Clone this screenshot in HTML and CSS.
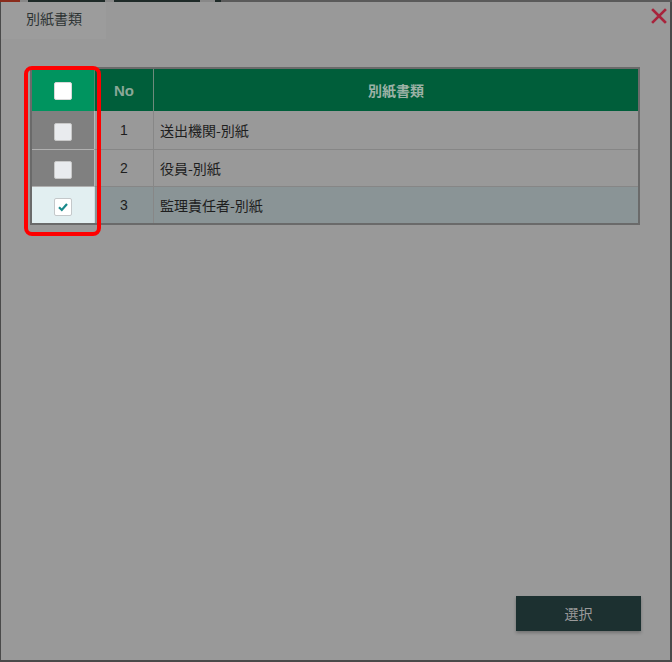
FILE: index.html
```html
<!DOCTYPE html>
<html lang="ja">
<head>
<meta charset="utf-8">
<link rel="stylesheet" href="styles.css">
</head>
<body>
<div class="topstrip">
  <span class="seg red"></span><span class="seg gap"></span><span class="seg dark w1"></span><span class="seg gap2"></span><span class="seg dark w2"></span><span class="seg gap3"></span><span class="seg dark w3"></span><span class="seg line"></span>
</div>
<div class="dialog">
  <div class="dlg-head">
    <div class="tab">別紙書類</div>
    <div class="close">
      <svg width="16" height="16" viewBox="0 0 16 16"><path d="M2 2 L14 14 M14 2 L2 14" stroke="#a8243c" stroke-width="2.6" stroke-linecap="square"/></svg>
    </div>
  </div>
  <div class="dlg-body">
    <div class="table-wrap">
      <table class="grid">
        <thead>
          <tr>
            <th class="c-check hl-head"><span class="cb cb-head"></span></th>
            <th class="c-no">No</th>
            <th class="c-name">別紙書類</th>
          </tr>
        </thead>
        <tbody>
          <tr>
            <td class="c-check hl-gray"><span class="cb cb-off"></span></td>
            <td class="c-no">1</td>
            <td class="c-name">送出機関-別紙</td>
          </tr>
          <tr class="later">
            <td class="c-check hl-gray"><span class="cb cb-off"></span></td>
            <td class="c-no">2</td>
            <td class="c-name">役員-別紙</td>
          </tr>
          <tr class="later selected">
            <td class="c-check hl-light"><span class="cb cb-on"><svg width="12" height="10" viewBox="0 0 12 10"><path d="M2 5.2 L4.8 8 L10 2" fill="none" stroke="#1a8a8c" stroke-width="2.2"/></svg></span></td>
            <td class="c-no">3</td>
            <td class="c-name">監理責任者-別紙</td>
          </tr>
        </tbody>
      </table>
      <div class="highlight"></div>
    </div>
  </div>
  <div class="dlg-foot">
    <button class="btn">選択</button>
  </div>
</div>
</body>
</html>
```
FILE: styles.css
```css
* { box-sizing: border-box; }
html, body { margin: 0; padding: 0; }
body {
  width: 672px;
  height: 662px;
  background: #4a4a4a;
  font-family: "Noto Sans CJK JP", "Liberation Sans", sans-serif;
  overflow: hidden;
}
.topstrip {
  display: flex;
  height: 2px;
}
.seg { display: block; height: 2px; }
.red { width: 20px; background: #8a2c1c; }
.gap { width: 8px; background: #888; }
.dark { background: #1e2a28; }
.w1 { width: 77px; }
.gap2 { width: 9px; background: #888; }
.w2 { width: 86px; }
.gap3 { width: 15px; background: #888; }
.w3 { width: 6px; }
.line { flex: 1; background: #5a5a5a; }

.dialog {
  margin-left: 1px;
  width: 669px;
  height: 658px;
  background: #999999;
  display: flex;
  flex-direction: column;
}
.dlg-head {
  display: flex;
  justify-content: space-between;
  align-items: flex-start;
  height: 65px;
}
.tab {
  width: 105px;
  height: 37px;
  background: #9c9c9c;
  color: #2e3434;
  font-size: 14px;
  line-height: 33px;
  padding-left: 25px;
}
.close {
  width: 16px;
  height: 16px;
  margin-top: 6px;
  margin-right: 3px;
}
.close svg { display: block; }

.dlg-body {
  padding-left: 29px;
  flex: 1;
}
.table-wrap {
  position: relative;
  width: 610px;
}
.grid {
  width: 610px;
  border-collapse: separate;
  border-spacing: 0;
  border: 2px solid #6a6a6a;
  table-layout: fixed;
  font-size: 14px;
}
.grid th {
  height: 42px;
  background: #005e3a;
  font-family: "Liberation Sans", "Noto Sans CJK JP", sans-serif;
  font-weight: bold;
  font-size: 15px;
  color: #8aa898;
  padding: 0;
}
.grid th.c-name { color: #9cb2a6; font-family: "Noto Sans CJK JP", sans-serif; font-size: 14px; }
.grid th.c-no { border-left: 1px solid #4e8a6e; border-right: 1px solid #6e8a7c; }
.grid td {
  height: 38px;
  padding: 0;
  color: #1e1e1e;
}
.grid tr.later td { border-top: 1px solid #868686; height: 37px; }
.c-check { width: 62px; text-align: center; }
.c-no { width: 60px; text-align: center; font-family: "Liberation Sans", sans-serif; }
td.c-no { border-right: 1px solid #878787; border-left: 1px solid #b6b6b6; }
.c-name { text-align: left; padding-left: 6px !important; }
th.c-name { text-align: center; padding-left: 0 !important; }
.grid th.hl-head { background: #00945f; }
.grid td.hl-gray { background: #808080; }
.grid tr.later td.hl-gray, .grid tr.later td.hl-light { border-top: 1px solid #b0b0b0; }
.grid td.hl-light { background: #e2eff1; }
.selected td { background: #8a9496; }
.selected td.c-no { border-left: 1px solid #cfdfe2; }

.cb {
  display: inline-flex;
  align-items: center;
  justify-content: center;
  width: 18px;
  height: 18px;
  border-radius: 2px;
  vertical-align: middle;
}
.cb-head { background: #ffffff; border: 1px solid #d8d8d8; }
.cb-off { background: #e9ebee; border: 1px solid #c8c8c8; }
.cb-on { background: #ffffff; border: 1px solid #c4c8ca; }
.cb svg { display: block; }

.highlight {
  position: absolute;
  left: -6px;
  top: -1px;
  width: 77px;
  height: 170px;
  border: 4px solid #ff0000;
  border-radius: 8px;
  pointer-events: none;
}

.dlg-foot {
  display: flex;
  justify-content: flex-end;
  padding-right: 29px;
  padding-bottom: 29px;
}
.btn {
  width: 125px;
  height: 35px;
  background: #1c3030;
  color: #9a9a9a;
  border: none;
  font-family: "Noto Sans CJK JP", sans-serif;
  font-size: 14px;
  line-height: 33px;
  box-shadow: 0 2px 3px rgba(0,0,0,0.25);
  padding: 0;
}
```
